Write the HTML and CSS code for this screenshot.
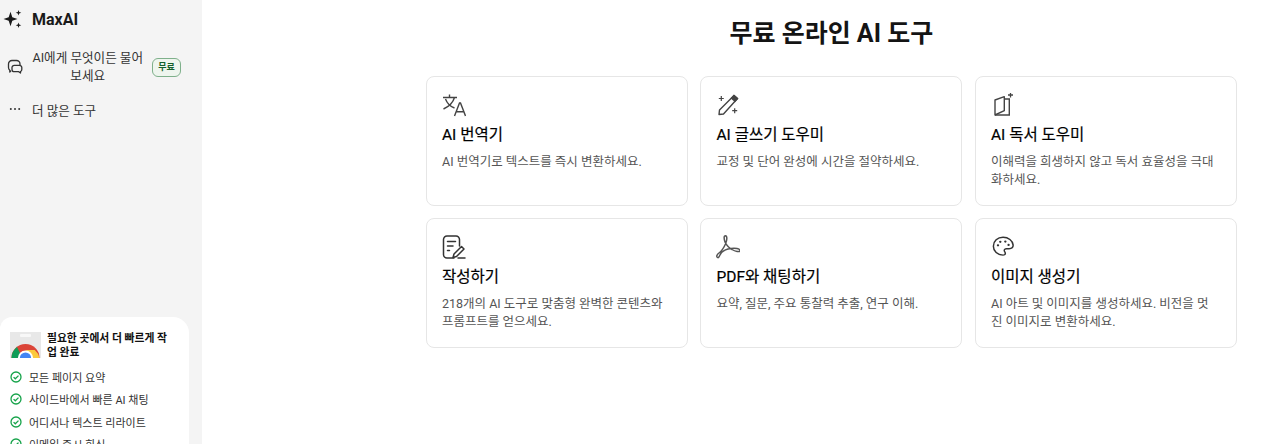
FILE: index.html
```html
<!DOCTYPE html>
<html lang="ko">
<head>
<meta charset="utf-8">
<title>MaxAI</title>
<link rel="stylesheet" href="styles.css">
</head>
<body>
<div class="app">
  <aside class="sidebar">
    <div class="nav">
      <div class="brand">
        <svg class="brand-icon" viewBox="0 0 20 20" width="20" height="20"><path fill="#1a1a1a" d="M7.500 2.800 9.300 8.200 14.500 10 9.300 11.800 7.500 17.200 5.700 11.800 0.500 10 5.700 8.200Z"/><path fill="#1a1a1a" d="M15.500 1 16.200 3.100 18.300 3.800 16.200 4.500 15.500 6.600 14.800 4.500 12.700 3.800 14.800 3.100Z"/><path fill="#1a1a1a" d="M15.500 13.400 16.200 15.500 18.300 16.200 16.200 16.900 15.500 19 14.800 16.900 12.700 16.200 14.800 15.500Z"/></svg>
        <span class="brand-name">MaxAI</span>
      </div>
      <div class="nav-item nav-chat">
        <svg class="nav-icon" viewBox="0 0 16 16" width="16" height="16" fill="none" stroke="#333" stroke-width="1.300" stroke-linejoin="round"><path d="M4 11.800 2.800 13 2.800 11.300A3.500 3.500 0 0 1 1.500 8.500V5A3.500 3.500 0 0 1 5 1.500H9.500A3.500 3.500 0 0 1 13 5V6"/><path d="M7.300 6.300H12.500A2.300 2.300 0 0 1 14.800 8.600V10.400A2.300 2.300 0 0 1 13.500 12.500V14L11.700 12.700H7.300A2.300 2.300 0 0 1 5 10.400V8.600A2.300 2.300 0 0 1 7.300 6.300Z"/></svg>
        <span class="chat-label">AI에게 무엇이든 물어보세요</span>
        <span class="badge">무료</span>
      </div>
      <div class="nav-item nav-more">
        <svg class="nav-icon" viewBox="0 0 16 16" width="16" height="16" fill="#333"><circle cx="3.800" cy="8" r="1"/><circle cx="8" cy="8" r="1"/><circle cx="12.200" cy="8" r="1"/></svg>
        <span>더 많은 도구</span>
      </div>
    </div>
    <section class="promo">
      <div class="promo-head">
        <svg class="store" viewBox="0 0 31 26" width="31" height="26"><rect width="31" height="26" fill="#e8e8e8"/><rect x="10" y="2" width="11" height="3" rx="1" fill="#f8f8f8"/><path d="M1.500 26a14 14 0 0 1 28 0Z" fill="#db4437"/><path d="M1.500 26a14 14 0 0 1 5.500-11L11 23l-1 3Z" fill="#0f9d58"/><path d="M15.500 18h9.200a14 14 0 0 1 4.800 8H22l-1-4Z" fill="#fbc93d"/><circle cx="15.500" cy="26" r="7.600" fill="#fff"/><circle cx="15.500" cy="26" r="5.600" fill="#4285f4"/></svg>
        <div class="promo-title">필요한 곳에서 더 빠르게 작업 완료</div>
      </div>
      <ul class="checks">
        <li><svg class="check" viewBox="0 0 12 12" width="12" height="12" fill="none" stroke="#16a34a" stroke-width="1.300"><circle cx="6" cy="6" r="5"/><path d="M3.600 6.100 5.300 7.800 8.500 4.600"/></svg>모든 페이지 요약</li>
        <li><svg class="check" viewBox="0 0 12 12" width="12" height="12" fill="none" stroke="#16a34a" stroke-width="1.300"><circle cx="6" cy="6" r="5"/><path d="M3.600 6.100 5.300 7.800 8.500 4.600"/></svg>사이드바에서 빠른 AI 채팅</li>
        <li><svg class="check" viewBox="0 0 12 12" width="12" height="12" fill="none" stroke="#16a34a" stroke-width="1.300"><circle cx="6" cy="6" r="5"/><path d="M3.600 6.100 5.300 7.800 8.500 4.600"/></svg>어디서나 텍스트 리라이트</li>
        <li><svg class="check" viewBox="0 0 12 12" width="12" height="12" fill="none" stroke="#16a34a" stroke-width="1.300"><circle cx="6" cy="6" r="5"/><path d="M3.600 6.100 5.300 7.800 8.500 4.600"/></svg>이메일 즉시 회신</li>
      </ul>
    </section>
  </aside>
  <main class="main">
    <div class="content">
      <h1 class="title">무료 온라인 AI 도구</h1>
      <div class="grid">
        <article class="card">
          <svg class="card-icon" viewBox="0 0 24 24" width="24" height="24" fill="none" stroke="#444" stroke-width="1.400"><path d="M1 4.500h14M7.500 1.500v3M12.500 4.500C11 9.500 7 13.500 1.500 16M3.500 6c1.500 4 5 7.500 9 9"/><path d="M12.500 23 17.500 10h1l5 13M14.300 18.800h7.400"/></svg>
          <h2 class="card-title">AI 번역기</h2>
          <p class="card-text">AI 번역기로 텍스트를 즉시 변환하세요.</p>
        </article>
        <article class="card">
          <svg class="card-icon" viewBox="0 0 24 24" width="24" height="24" fill="none" stroke="#444" stroke-width="1.400"><path d="M18 2.500 21.500 5.500 7.500 21 3 21.500 3.500 17Z" stroke-linejoin="round"/><path d="M18 2.500 21.500 5.500 19 8.300 15.500 5.300Z" fill="#444"/><path d="M5.300 3v5M2.800 5.500h5M18.700 15.200v5M16.200 17.700h5" stroke-width="1.200"/></svg>
          <h2 class="card-title">AI 글쓰기 도우미</h2>
          <p class="card-text">교정 및 단어 완성에 시간을 절약하세요.</p>
        </article>
        <article class="card">
          <svg class="card-icon" viewBox="0 0 24 24" width="24" height="24" fill="none" stroke="#444" stroke-width="1.400"><path d="M4 7 13.300 3.700V17.700L4 22Z" stroke-linejoin="round"/><path d="M13.300 6H18.300V22H4"/><path d="M19.500 -0.500v5M17 2h5" stroke-width="1.300"/></svg>
          <h2 class="card-title">AI 독서 도우미</h2>
          <p class="card-text">이해력을 희생하지 않고 독서 효율성을 극대화하세요.</p>
        </article>
        <article class="card">
          <svg class="card-icon" viewBox="0 0 24 24" width="24" height="24" fill="none" stroke="#333" stroke-width="1.500" stroke-linecap="round"><path d="M12 23H5a3.500 3.500 0 0 1-3.500-3.500v-15A3.500 3.500 0 0 1 5 1h9a3.500 3.500 0 0 1 3.500 3.500V11"/><path d="M5.500 6.500h8M5.500 11h5.500M5.500 15.500h2"/><path d="M19.500 11.500 22 14 14.500 21.500 11 22.500 12 19Z" stroke-linejoin="round"/><path d="M16 23h7"/></svg>
          <h2 class="card-title">작성하기</h2>
          <p class="card-text">218개의 AI 도구로 맞춤형 완벽한 콘텐츠와 프롬프트를 얻으세요.</p>
        </article>
        <article class="card">
          <svg class="card-icon" viewBox="0 0 24 24" width="24" height="24" fill="none" stroke="#555" stroke-width="1.500" stroke-linejoin="round"><path d="M1.500 22.500C0 21.500 1 19.500 3 18 5 16.500 7 14.500 9.500 9 11 5.500 11.500 1 9.500 0.800 7.500 0.800 8 4 9 7 10.500 10 13 13 16 14.500 19 16.500 24 17.500 24 15.500 24 13.500 19 13 15 13.500 11 14 7.500 15.500 5.500 17.500 3.500 20 3 23.500 1.500 22.500Z"/></svg>
          <h2 class="card-title">PDF와 채팅하기</h2>
          <p class="card-text">요약, 질문, 주요 통찰력 추출, 연구 이해.</p>
        </article>
        <article class="card">
          <svg class="card-icon" viewBox="0 0 24 24" width="24" height="24" fill="none" stroke="#333" stroke-width="1.600"><g transform="translate(1 1) scale(.92 .85)"><path d="M12 1.500C6 1.500 1.500 6 1.500 12s4.500 10.500 10.500 10.500c1.700 0 2.500-1 2.500-2.200 0-1.500-1.200-1.800-1.200-3.200 0-1.200 1-2.100 2.300-2.100h3c2.500 0 4.400-1.800 4.400-4.300C22.500 5.500 17.800 1.500 12 1.500Z"/><circle cx="6.500" cy="11" r="1.300" fill="#333" stroke="none"/><circle cx="9" cy="6.800" r="1.300" fill="#333" stroke="none"/><circle cx="14.500" cy="6.500" r="1.300" fill="#333" stroke="none"/><circle cx="18" cy="10.500" r="1.300" fill="#333" stroke="none"/></g></svg>
          <h2 class="card-title">이미지 생성기</h2>
          <p class="card-text">AI 아트 및 이미지를 생성하세요. 비전을 멋진 이미지로 변환하세요.</p>
        </article>
      </div>
    </div>
  </main>
</div>
</body>
</html>
```
FILE: styles.css
```css
* { box-sizing: border-box; }
html, body { margin: 0; height: 100%; overflow: hidden; }
body {
  font-family: Roboto, "Noto Sans CJK KR", sans-serif;
  color: #1a1a1a;
  background: #fff;
}
.app { display: flex; height: 444px; overflow: hidden; }
.sidebar {
  flex: 0 0 202px;
  background: #f4f4f4;
  overflow: hidden;
  padding-right: 13px;
}
.nav { height: 317px; padding: 9px 0 0 3px; }
.brand { display: flex; align-items: center; gap: 9px; height: 20px; }
.brand-name { font-size: 16px; font-weight: 700; }
.nav-item { display: flex; align-items: center; font-size: 12.6px; color: #333; padding-left: 4px; }
.nav-icon { flex: none; margin-right: 9px; }
.nav-chat { margin-top: 19px; height: 38px; }
.chat-label { width: 111.5px; text-align: center; line-height: 18px; }
.badge {
  margin-left: 8.5px;
  flex: none;
  font-size: 9px;
  line-height: 17px;
  height: 19px;
  width: 29px;
  text-align: center;
  color: #14602c;
  background: #eef5ee;
  border: 1px solid #7fb08b;
  border-radius: 6px;
  font-weight: 700;
}
.nav-more { margin-top: 13px; height: 20px; }
.promo {
  background: #fff;
  border-radius: 12px 16px 0 0;
  height: 160px;
  padding: 15px 10px 0;
}
.promo-head { display: flex; gap: 6px; }
.store { flex: none; }
.promo-title { font-size: 10.8px; font-weight: 700; line-height: 13.5px; color: #111; width: 125px; }
.checks { list-style: none; margin: 7px 0 0; padding: 0; }
.checks li { display: flex; align-items: center; gap: 7px; height: 22.3px; font-size: 11px; color: #333; }
.check { flex: none; }
.main { flex: 1; padding-left: 223.8px; }
.content { width: 811px; }
.title {
  margin: 0;
  height: 76px;
  padding-top: 16px;
  font-size: 25px;
  line-height: 36px;
  font-weight: 700;
  text-align: center;
  color: #141414;
}
.grid { display: grid; grid-template-columns: repeat(3, 262px); column-gap: 12.5px; row-gap: 12px; }
.card {
  height: 130px;
  background: #fff;
  border: 1px solid #e6e6e6;
  border-radius: 8px;
  padding: 16px 18px 16px 15.2px;
}
.card-icon { display: block; }
.card-title { margin: 7px 0 0; font-size: 15.5px; line-height: 22px; font-weight: 400; color: #000; -webkit-text-stroke: 0.2px #000; }
.card-text { margin: 7px 0 0; font-size: 12.5px; line-height: 18px; color: #555; }
```
